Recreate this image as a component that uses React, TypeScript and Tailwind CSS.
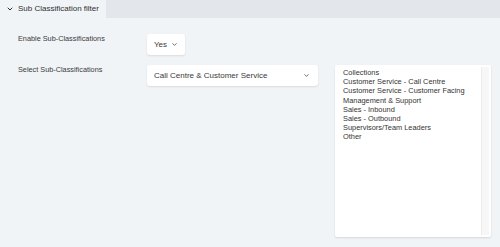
import { ChevronDown } from 'lucide-react'

const options = [
  'Collections',
  'Customer Service - Call Centre',
  'Customer Service - Customer Facing',
  'Management & Support',
  'Sales - Inbound',
  'Sales - Outbound',
  'Supervisors/Team Leaders',
  'Other',
]

export default function App() {
  return (
    <div className="w-[500px] h-[247px] overflow-hidden bg-[#f1f4f7] font-['Liberation_Sans',Arial,sans-serif] text-[#3a3a3a]">
      {/* Tab strip */}
      <div className="flex h-[18px] bg-[#e3e6ea]">
        <div className="flex items-center gap-[4px] bg-[#f1f4f7] pl-[6px] pr-[7px] text-[8px] text-[#2f2f2f]">
          <ChevronDown className="h-[8px] w-[8px]" strokeWidth={3} />
          <span>Sub Classification filter</span>
        </div>
      </div>

      <div className="pl-[18px] pt-[16px]">
        {/* Enable row */}
        <div className="flex items-start">
          <div className="w-[129px] text-[7.3px]">Enable Sub-Classifications</div>
          <div className="flex h-[21px] w-[38px] items-center justify-between rounded-[3px] bg-white pl-[7px] pr-[7px] text-[8px] shadow-[0_1px_2px_rgba(0,0,0,0.1)]">
            <span>Yes</span>
            <ChevronDown className="h-[7px] w-[7px]" strokeWidth={2.5} />
          </div>
        </div>

        {/* Select row */}
        <div className="mt-[10px] flex items-start">
          <div className="w-[129px] text-[7.3px]">Select Sub-Classifications</div>
          <div className="flex h-[21px] w-[171px] items-center justify-between rounded-[3px] bg-white pl-[7px] pr-[8px] text-[8px] shadow-[0_1px_2px_rgba(0,0,0,0.1)]">
            <span>Call Centre &amp; Customer Service</span>
            <ChevronDown className="h-[7px] w-[7px]" strokeWidth={2.5} />
          </div>
          <div className="ml-[17px] flex h-[172px] w-[156px] rounded-[2px] bg-white shadow-[0_1px_2px_rgba(0,0,0,0.12)]">
            <ul className="flex-1 pl-[8px] pt-[3px] text-[7.4px] leading-[9.2px] text-[#333]">
              {options.map((o) => (
                <li key={o}>{o}</li>
              ))}
            </ul>
            <div className="my-[2px] mr-[2px] w-[8px] border-l border-[#ececec] bg-[#f7f7f7]" />
          </div>
        </div>
      </div>
    </div>
  )
}
